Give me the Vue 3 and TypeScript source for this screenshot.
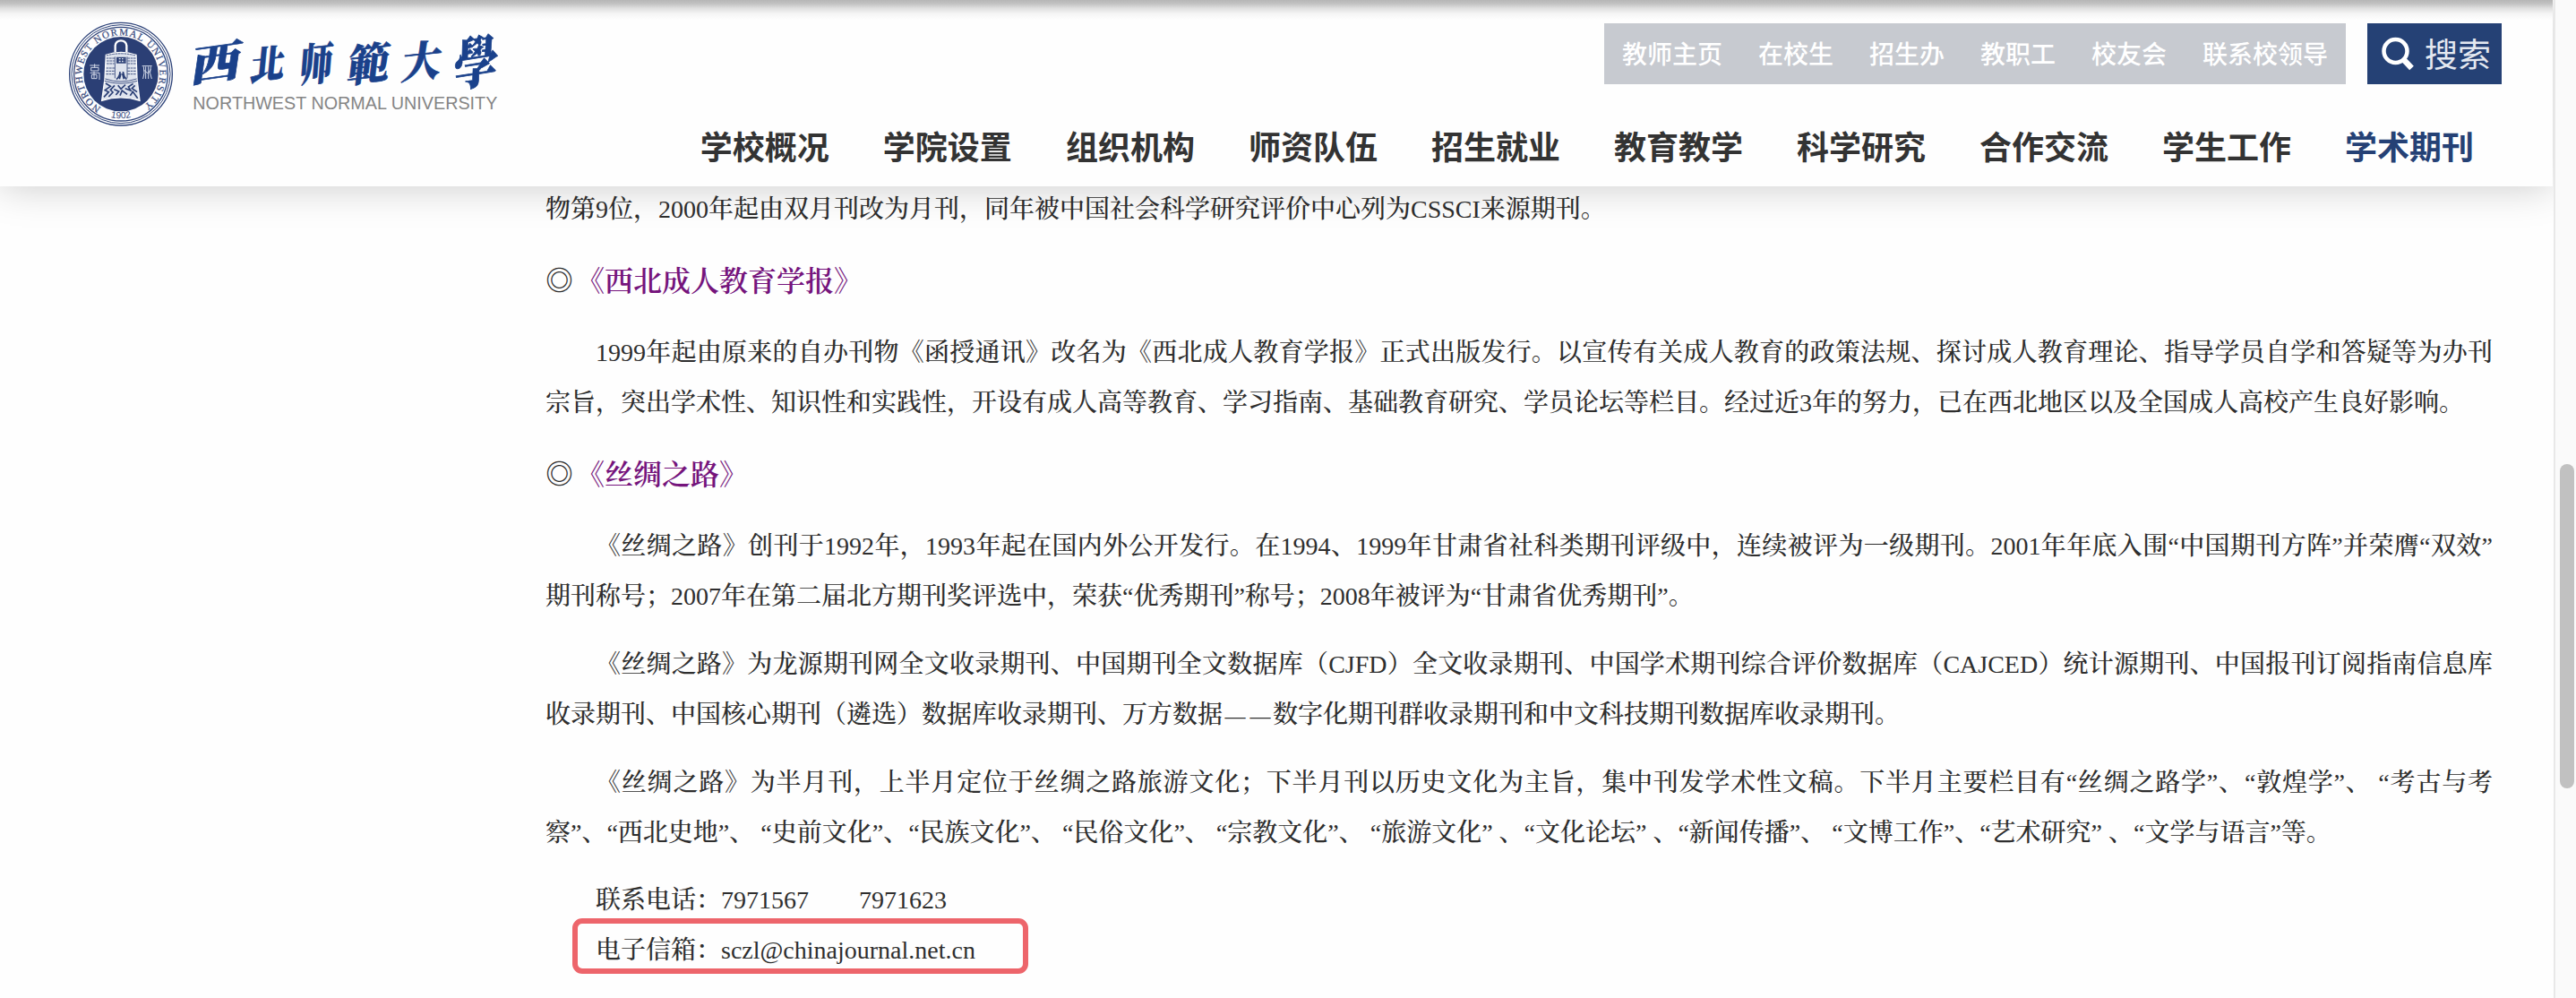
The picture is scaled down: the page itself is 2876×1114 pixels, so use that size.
<script setup lang="ts">
interface Line {
  text: string
  indent?: boolean
  fill?: boolean
}
interface Block {
  kind: 'title' | 'para'
  title?: string
  lines?: Line[]
}

const quickLinks: string[] = ['教师主页', '在校生', '招生办', '教职工', '校友会', '联系校领导']
const navItems: string[] = ['学校概况', '学院设置', '组织机构', '师资队伍', '招生就业', '教育教学', '科学研究', '合作交流', '学生工作', '学术期刊']
const activeNav = '学术期刊'

const blocks: Block[] = [
  { kind: 'para', lines: [{ text: '物第9位，2000年起由双月刊改为月刊，同年被中国社会科学研究评价中心列为CSSCI来源期刊。' }] },
  { kind: 'title', title: '《西北成人教育学报》' },
  {
    kind: 'para',
    lines: [
      { text: '1999年起由原来的自办刊物《函授通讯》改名为《西北成人教育学报》正式出版发行。以宣传有关成人教育的政策法规、探讨成人教育理论、指导学员自学和答疑等为办刊', indent: true, fill: true },
      { text: '宗旨，突出学术性、知识性和实践性，开设有成人高等教育、学习指南、基础教育研究、学员论坛等栏目。经过近3年的努力，已在西北地区以及全国成人高校产生良好影响。' },
    ],
  },
  { kind: 'title', title: '《丝绸之路》' },
  {
    kind: 'para',
    lines: [
      { text: '《丝绸之路》创刊于1992年，1993年起在国内外公开发行。在1994、1999年甘肃省社科类期刊评级中，连续被评为一级期刊。2001年年底入围“中国期刊方阵”并荣膺“双效”', indent: true, fill: true },
      { text: '期刊称号；2007年在第二届北方期刊奖评选中，荣获“优秀期刊”称号；2008年被评为“甘肃省优秀期刊”。' },
    ],
  },
  {
    kind: 'para',
    lines: [
      { text: '《丝绸之路》为龙源期刊网全文收录期刊、中国期刊全文数据库（CJFD）全文收录期刊、中国学术期刊综合评价数据库（CAJCED）统计源期刊、中国报刊订阅指南信息库', indent: true, fill: true },
      { text: '收录期刊、中国核心期刊（遴选）数据库收录期刊、万方数据——数字化期刊群收录期刊和中文科技期刊数据库收录期刊。' },
    ],
  },
  {
    kind: 'para',
    lines: [
      { text: '《丝绸之路》为半月刊，上半月定位于丝绸之路旅游文化；下半月刊以历史文化为主旨，集中刊发学术性文稿。下半月主要栏目有“丝绸之路学”、“敦煌学”、 “考古与考', indent: true, fill: true },
      { text: '察”、“西北史地”、 “史前文化”、“民族文化”、 “民俗文化”、 “宗教文化”、 “旅游文化” 、“文化论坛” 、“新闻传播”、 “文博工作”、“艺术研究” 、“文学与语言”等。' },
    ],
  },
]

// Splits a line so that the dashes can be set apart from the running text.
const pieces = (text: string): string[] => text.split(/(—)/).filter((t) => t !== '')
</script>

<template>
  <div class="window" lang="zh-CN">
    <div class="page">
      <header class="header">
        <svg class="logo" viewBox="0 0 1560 618" width="520" height="206">
          <defs>
            <path id="ring" d="M158.500 360 A130 130 0 1 1 293 359" />
            <path id="year" d="M165 384 A149 149 0 0 0 285 384" />
          </defs>
          <g fill="none" stroke="#2e4379">
            <circle cx="225" cy="248" r="172" stroke-width="4" />
            <circle cx="225" cy="248" r="165" stroke-width="3" />
            <circle cx="225" cy="248" r="157" stroke-width="4" />
          </g>
          <circle cx="225" cy="248" r="125" fill="#2b3f75" />
          <text class="seal-text"><textPath href="#ring" textLength="664">NORTHWEST NORMAL UNIVERSITY</textPath></text>
          <text class="seal-year"><textPath href="#year" startOffset="50%" text-anchor="middle">1902</textPath></text>
          <path d="M206 175 V153 Q208 136 225 136 Q242 136 244 153 V175" fill="none" stroke="#fff" stroke-width="7" />
          <path d="M175 184 Q225 166 276 184 L279 264 L288 337 Q225 316 161 337 L171 264 Z" fill="#dfe4ee" stroke="#fff" stroke-width="4" />
          <g fill="none" stroke="#2b3f75" stroke-width="2.500">
            <path d="M176 186 Q225 173 275 186 M176 195 H204 M177 204 H203 M177 213 H203 M176 228 H204 M175 238 H204 M175 248 H204 M247 195 H275 M247 204 H275 M247 213 H275 M247 228 H276 M247 238 H277 M247 248 H277" stroke-dasharray="8 2" />
            <path d="M205 190 V262 M246 190 V262 M172 264 Q225 282 278 264 M170 271 Q225 288 280 271" />
            <path d="M212 193 H240 V210 H212 Z M212 201 H240 M216 193 V211 M226 193 V211 M235 193 V211" stroke-width="4" />
            <path d="M222 240 Q222 256 210 266 M232 240 Q234 256 244 266 M225 246 L220 265 M230 246 L235 265" stroke-width="5" />
            <path d="M174 279 L190 289 L172 302 L184 308 L168 325 M184 324 L198 309 L190 301 L204 286 M202 299 L218 306 L208 318 M215 286 L225 298 L240 284 M222 320 L229 303 L246 316 M239 296 L258 303 L250 291 L266 280 M272 286 L262 296 L279 308 M256 320 L265 307 L281 329" stroke-width="5" />
          </g>
          <g fill="none" stroke="#d5dbea" stroke-width="3">
            <path d="M121 219 H153 M137 214 V226 M125 226 H150 V237 H125 Z M122 244 H153 V267 M127 250 H144 V263 H127 Z M135 239 V261" />
            <path d="M296 221 H329 M301 223 Q306 246 299 264 M308 223 V264 M317 223 V264 M325 223 Q319 246 328 264 M301 234 L316 246 L325 232" />
          </g>
          <g class="brush">
            <text transform="translate(455 276) rotate(-8) scale(1.120 .96)" font-size="150">西</text>
            <text transform="translate(654 270) rotate(-7) scale(.86 .96)" font-size="134">北</text>
            <text transform="translate(822 274) rotate(-6) scale(.8 1.080)" font-size="136">师</text>
            <text transform="translate(980 276) rotate(-7) scale(.98 1)" font-size="144">範</text>
            <text transform="translate(1162 264) rotate(-6) scale(.94 1)" font-size="140">大</text>
            <text transform="translate(1338 290) rotate(-9) scale(.94 1.160)" font-size="160">學</text>
          </g>
          <text class="latin" x="466" y="366" textLength="1020" lengthAdjust="spacingAndGlyphs">NORTHWEST NORMAL UNIVERSITY</text>
        </svg>

        <div class="menus">
          <div class="top-row">
            <nav class="quick">
              <a v-for="q in quickLinks" :key="q">{{ q }}</a>
            </nav>
            <div class="search">
              <svg width="38" height="38" viewBox="0 0 38 38" fill="none" stroke="#fff">
                <circle cx="16.500" cy="16" r="13" stroke-width="4.500" />
                <path d="M25.500 25.500 L34.500 35" stroke-width="6.500" />
              </svg>
              <span>搜索</span>
            </div>
          </div>
          <nav class="main-nav">
            <a v-for="n in navItems" :key="n" :class="{ active: n === activeNav }">{{ n }}</a>
          </nav>
        </div>
      </header>

      <main class="article">
        <template v-for="(b, i) in blocks" :key="i">
          <h3 v-if="b.kind === 'title'"><span class="bullet">◎</span><a>{{ b.title }}</a></h3>
          <section v-else>
            <div v-for="(l, j) in b.lines" :key="j" class="line" :class="{ indent: l.indent, fill: l.fill }"><template v-for="(t, k) in pieces(l.text)" :key="k"><span v-if="t === '—'" class="dash">—</span><template v-else>{{ t }}</template></template></div>
          </section>
        </template>
        <section class="contact">
          <div class="line indent">联系电话：7971567<span class="gap"></span>7971623</div>
          <div class="line indent mail">电子信箱：sczl@chinajournal.net.cn</div>
        </section>
      </main>
    </div>
    <aside class="scrollbar"><div class="thumb"></div></aside>
  </div>
</template>

<style>
body {
  background: #fff;
  overflow: hidden;
}
</style>

<style scoped>
.window {
  display: flex;
  width: 2876px;
  height: 1114px;
  overflow: hidden;
  background: #fefefe;
}
.page {
  width: 2851px;
  overflow: hidden;
}
.header {
  position: relative;
  z-index: 1;
  display: flex;
  justify-content: space-between;
  box-sizing: border-box;
  width: 2850px;
  height: 208px;
  padding: 0 57px 0 60px;
  background: linear-gradient(#b6b6b6 0, #c1c1c1 4px, #dedede 9px, #f4f4f4 15px, #fefefe 22px);
  box-shadow: 0 0 42px rgba(0, 0, 0, 0.21);
}
.logo {
  display: block;
}
.seal-text {
  font: 33px "Liberation Serif", serif;
  fill: #35487c;
  stroke: #35487c;
  stroke-width: 0.6px;
}
.seal-year {
  font: 31px "Liberation Sans", sans-serif;
  fill: #35487c;
}
.brush {
  font-family: "Noto Serif CJK TC", "Noto Serif CJK SC", "Noto Sans CJK TC", serif;
  font-weight: 900;
  font-style: italic;
  fill: #1a418b;
  stroke: #1a418b;
  stroke-width: 2px;
}
.latin {
  font: 59px "Liberation Sans", sans-serif;
  fill: #858585;
}
.menus {
  display: flex;
  flex-direction: column;
  align-items: flex-end;
  padding-top: 26px;
  font-family: "Noto Sans CJK SC", sans-serif;
}
.top-row {
  display: flex;
  gap: 24px;
  height: 68px;
}
.quick {
  display: flex;
  background: #c7cad0;
}
.quick a {
  padding: 0 20px;
  font-size: 28px;
  font-weight: 500;
  line-height: 66px;
  color: #fff;
}
.search {
  display: flex;
  align-items: center;
  gap: 11px;
  box-sizing: border-box;
  width: 150px;
  padding-left: 15px;
  background: #254175;
  color: #e4e8f0;
  font-size: 37px;
  line-height: 68px;
  white-space: nowrap;
}
.search span {
  margin-top: -2px;
}
.main-nav {
  display: flex;
  gap: 60px;
  padding: 38px 31px 0 0;
}
.main-nav a {
  font-size: 36px;
  font-weight: 700;
  line-height: 60px;
  color: #333;
}
.main-nav a.active {
  color: #254175;
}
.article {
  display: flex;
  flex-direction: column;
  gap: 20px;
  width: 2174px;
  margin: -2px 0 0 609px;
  color: #2e2e2e;
  font-family: "Liberation Serif", "Noto Serif CJK SC", "Noto Sans CJK SC", serif;
  font-size: 28px;
  font-weight: 500;
  line-height: 56px;
  text-spacing-trim: space-all;
}
.line {
  height: 56px;
  white-space: nowrap;
}
.indent {
  padding-left: 56px;
}
.fill {
  text-align: justify;
  text-align-last: justify;
}
.dash {
  display: inline-block;
  width: 28px;
  font-size: 23px;
  text-align: center;
}
h3 {
  display: flex;
  height: 64px;
  margin: 0;
  font-size: 32px;
  font-weight: 400;
  line-height: 64px;
}
.bullet {
  width: 34px;
  font-size: 31px;
}
h3 a {
  color: #75147c;
  font-weight: 600;
}
.gap {
  display: inline-block;
  width: 56px;
}
.contact {
  margin-top: -1px;
}
.mail {
  position: relative;
}
.mail::after {
  content: "";
  position: absolute;
  left: 30px;
  top: -8px;
  box-sizing: border-box;
  width: 509px;
  height: 62px;
  border: 6px solid #ed656b;
  border-radius: 11px;
}
.scrollbar {
  box-sizing: border-box;
  width: 25px;
  padding: 518px 0 0 5px;
  border-left: 2px solid #e8e8e8;
  background: #fafafa;
}
.thumb {
  width: 16px;
  height: 362px;
  border-radius: 8px;
  background: #c1c1c1;
}
</style>
